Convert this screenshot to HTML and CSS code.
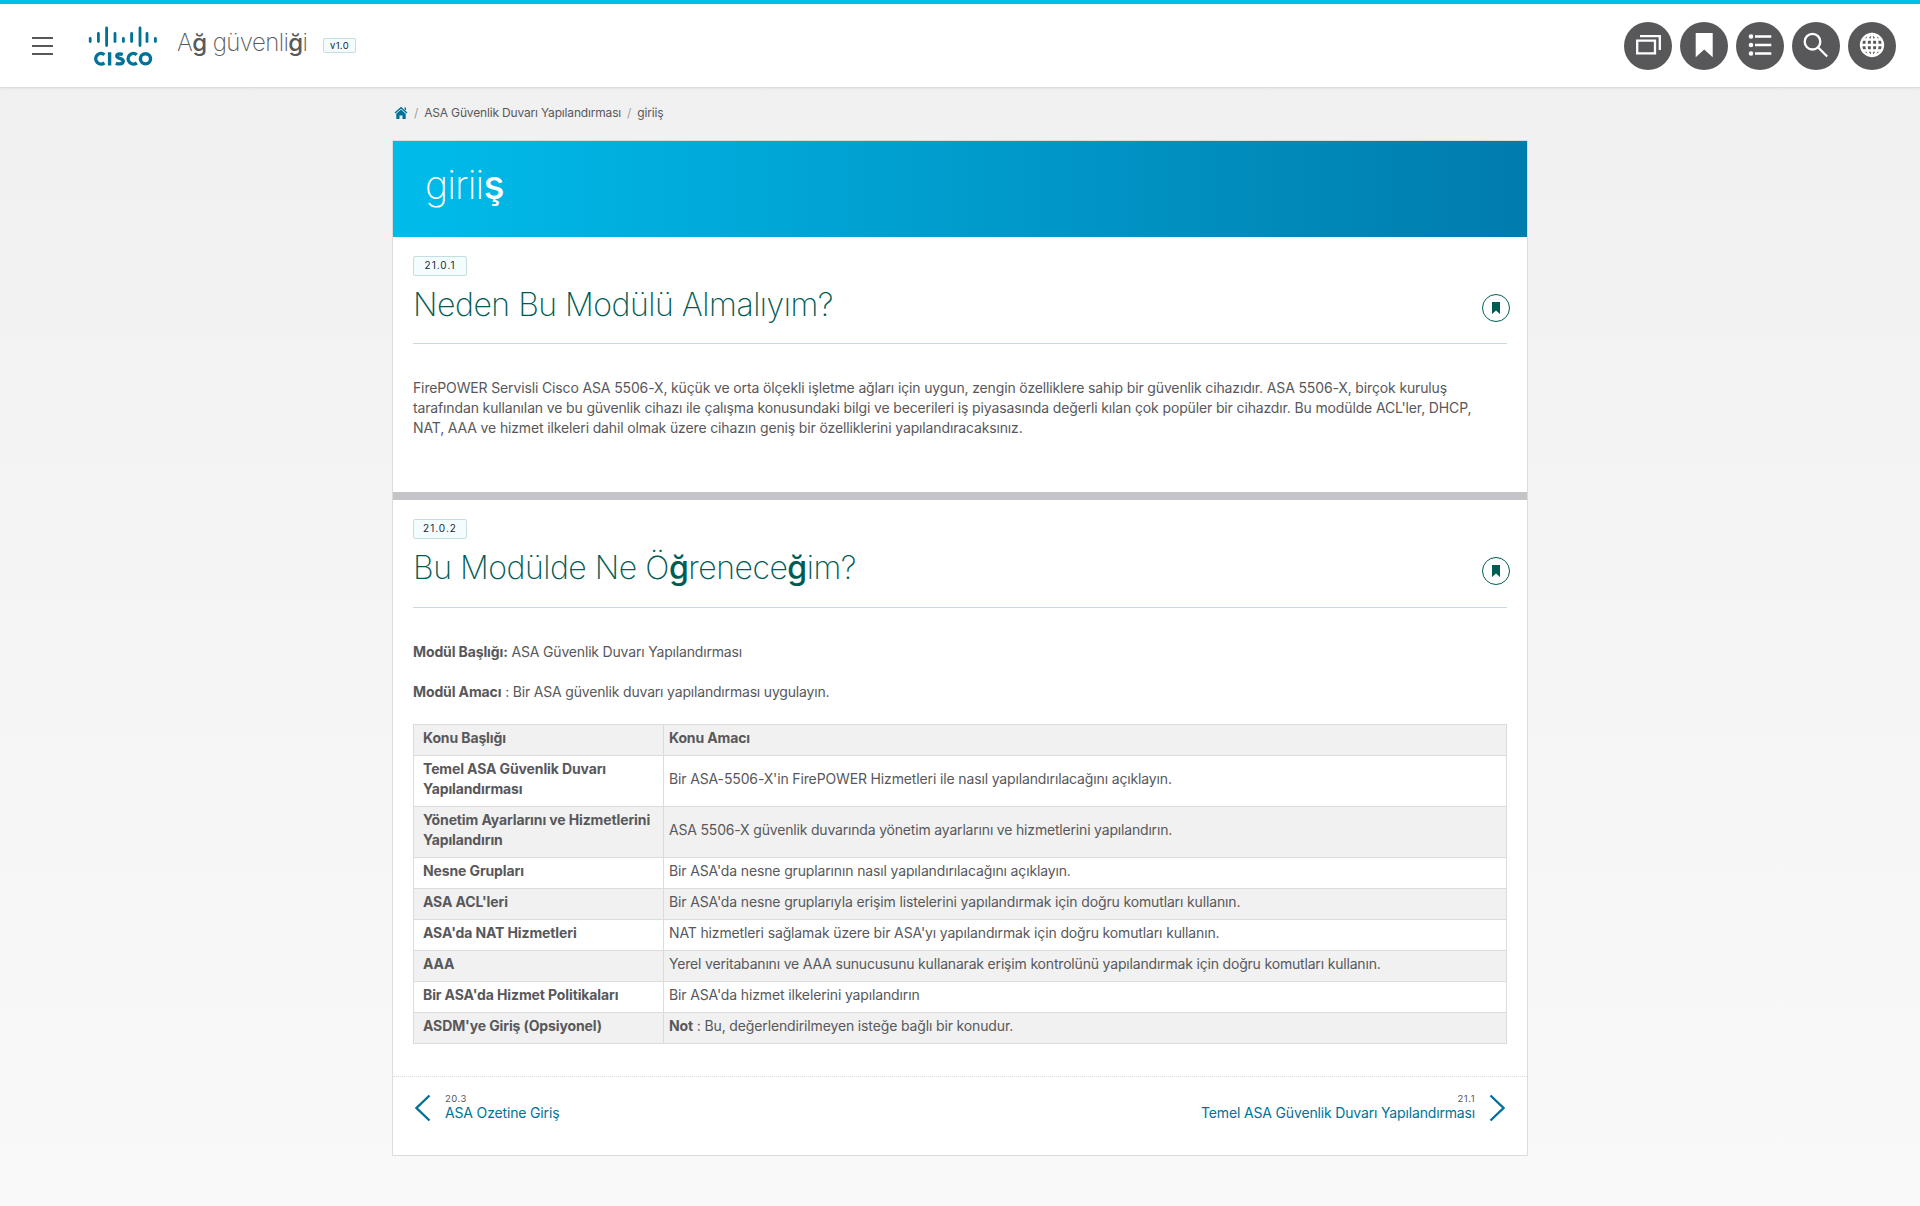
FILE: index.html
```html
<!DOCTYPE html>
<html lang="tr">
<head>
<meta charset="utf-8">
<title>Ağ güvenliği</title>
<link rel="stylesheet" href="styles.css">
</head>
<body>
<header class="topbar">
  <button class="menu-btn" aria-label="Menü"><span></span><span></span><span></span></button>
  <svg class="logo" width="70" height="42" viewBox="0 0 70 42" role="img" aria-label="Cisco">
    <g stroke="#007298" stroke-width="2.8" stroke-linecap="round">
      <path d="M2.2 13.4v3.2M10.4 8.4v8.2M18.6 2.9v17.700M27 8.4v8.2M35.4 13.4v3.2M43.6 8.4v8.2M52 2.9v17.700M59 8.4v8.2M67.4 13.4v3.2"/>
    </g>
    <g fill="none" stroke="#007298" stroke-width="3.4">
      <path d="M16.400 29.700a5.300 5.300 0 1 0 0 8.200M21.600 27.200v13.400M34.800 29.500c-2-.8-6-.9-6 1.500 0 3 6.400 1.700 6.400 5.200 0 3-4.600 3.200-7.400 2M48.800 29.700a5.300 5.300 0 1 0 0 8.200"/>
      <circle cx="57.500" cy="33.800" r="5.100"/>
    </g>
  </svg>
  <h1 class="course">A<b>ğ</b> güvenli<b>ğ</b>i</h1>
  <span class="version">v1.0</span>
  <nav class="tools">
    <button class="tool" aria-label="Pencereler"><svg width="48" height="48" viewBox="0 0 48 48"><path d="M13.200 18.700h17.800v12.600H13.200zM16 14.200h19.800V28"/></svg></button>
    <button class="tool" aria-label="Yer imi"><svg width="48" height="48" viewBox="0 0 48 48"><path class="solid" d="M15.700 11h17v24.200L24.200 27.500 15.700 35.200z"/></svg></button>
    <button class="tool" aria-label="Liste"><svg width="48" height="48" viewBox="0 0 48 48"><path d="M19 14.500h16.300M19 23h16.300M19 31.500h16.300"/><g class="solid"><circle cx="15" cy="14.500" r="2.300"/><circle cx="15" cy="23" r="2.300"/><circle cx="15" cy="31.500" r="2.300"/></g></svg></button>
    <button class="tool" aria-label="Ara"><svg width="48" height="48" viewBox="0 0 48 48"><circle cx="20.500" cy="19.700" r="7.800"/><path d="M25.200 24.500l10 10"/></svg></button>
    <button class="tool" aria-label="Dil"><svg width="48" height="48" viewBox="0 0 48 48"><circle cx="24" cy="23" r="11"/><ellipse cx="24" cy="23" rx="5.500" ry="11"/><path d="M24 12v22M13 23h22M15 17.500h18M15 28.500h18"/></svg></button>
  </nav>
</header>
<main class="page">
  <nav class="crumbs">
    <svg width="14" height="14" viewBox="0 0 14 14"><path d="M1 7l6-5.300L13 7" fill="none" stroke="#007298" stroke-width="1.300"/><path d="M7 3.500l4.700 4.200V13H8.500V9.500h-3V13H2.300V7.700zM10.500 1.500H12v3l-1.500-1.300z" fill="#007298"/></svg>
    <i>/</i><span>ASA Güvenlik Duvarı Yapılandırması</span><i>/</i><span>giriiş</span>
  </nav>
  <article class="card">
    <div class="banner"><h2>girii<b>ş</b></h2></div>
    <section class="topic">
      <span class="tag">21.0.1</span>
      <div class="heading"><h3>Neden Bu Modülü Almalıyım?</h3>
        <button class="mark" aria-label="Yer imi"><svg width="8" height="12" viewBox="0 0 8 12"><path d="M0 0h8v12L4 8.500 0 12z" fill="#005c53"/></svg></button></div>
      <p class="intro">FirePOWER Servisli Cisco ASA 5506-X, küçük ve orta ölçekli işletme ağları için uygun, zengin özelliklere sahip bir güvenlik cihazıdır. ASA 5506-X, birçok kuruluş<br>tarafından kullanılan ve bu güvenlik cihazı ile çalışma konusundaki bilgi ve becerileri iş piyasasında değerli kılan çok popüler bir cihazdır. Bu modülde ACL'ler, DHCP,<br>NAT, AAA ve hizmet ilkeleri dahil olmak üzere cihazın geniş bir özelliklerini yapılandıracaksınız.</p>
    </section>
    <section class="topic topic-next">
      <span class="tag">21.0.2</span>
      <div class="heading"><h3>Bu Modülde Ne Ö<b>ğ</b>renece<b>ğ</b>im?</h3>
        <button class="mark" aria-label="Yer imi"><svg width="8" height="12" viewBox="0 0 8 12"><path d="M0 0h8v12L4 8.500 0 12z" fill="#005c53"/></svg></button></div>
      <p class="meta"><strong>Modül Başlığı:</strong> <span class="tight">ASA Güvenlik Duvarı Yapılandırması</span></p>
      <p class="meta"><strong>Modül Amacı</strong> <span class="tight">: Bir ASA güvenlik duvarı yapılandırması uygulayın.</span></p>
      <table class="topics">
        <tr><th>Konu Başlığı</th><th>Konu Amacı</th></tr>
        <tr><th>Temel ASA Güvenlik Duvarı Yapılandırması</th><td>Bir ASA-5506-X'in FirePOWER Hizmetleri ile nasıl yapılandırılacağını açıklayın.</td></tr>
        <tr><th>Yönetim Ayarlarını ve Hizmetlerini Yapılandırın</th><td class="tight">ASA 5506-X güvenlik duvarında yönetim ayarlarını ve hizmetlerini yapılandırın.</td></tr>
        <tr><th>Nesne Grupları</th><td>Bir ASA'da nesne gruplarının nasıl yapılandırılacağını açıklayın.</td></tr>
        <tr><th>ASA ACL'leri</th><td>Bir ASA'da nesne gruplarıyla erişim listelerini yapılandırmak için doğru komutları kullanın.</td></tr>
        <tr><th>ASA'da NAT Hizmetleri</th><td>NAT hizmetleri sağlamak üzere bir ASA'yı yapılandırmak için doğru komutları kullanın.</td></tr>
        <tr><th>AAA</th><td class="tight">Yerel veritabanını ve AAA sunucusunu kullanarak erişim kontrolünü yapılandırmak için doğru komutları kullanın.</td></tr>
        <tr><th>Bir ASA'da Hizmet Politikaları</th><td>Bir ASA'da hizmet ilkelerini yapılandırın</td></tr>
        <tr><th>ASDM'ye Giriş (Opsiyonel)</th><td><strong>Not</strong> : Bu, değerlendirilmeyen isteğe bağlı bir konudur.</td></tr>
      </table>
    </section>
    <footer class="pager">
      <a class="prev"><svg width="17" height="28" viewBox="0 0 17 28"><path d="M15.500 1.500L2.500 14l13 12.500"/></svg><span><small>20.3</small><span>ASA Ozetine Giriş</span></span></a>
      <a class="next"><span><small>21.1</small><span>Temel ASA Güvenlik Duvarı Yapılandırması</span></span><svg width="17" height="28" viewBox="0 0 17 28"><path d="M1.500 1.500l13 12.500-13 12.500"/></svg></a>
    </footer>
  </article>
</main>
</body>
</html>
```
FILE: styles.css
```css
* { box-sizing: border-box; }
body {
  margin: 0;
  min-height: 1206px;
  font: 14px/20px Inter, "Liberation Sans", sans-serif;
  letter-spacing: -.14px;
  color: #58585b;
  background: linear-gradient(#f0f0f0, #f9f9f9);
}
h1, h2, h3, p { margin: 0; font-weight: 200; }
button { border: 0; padding: 0; margin: 0; background: none; }
b { font-weight: 550; }
.tight { letter-spacing: -.18px; }
.topbar {
  display: flex;
  align-items: flex-start;
  height: 88px;
  border-top: 4px solid #00bceb;
  border-bottom: 1px solid #dcdcdc;
  box-shadow: 0 1px 2px rgba(0, 0, 0, .06);
  background: #fff;
  padding: 0 24px 0 32px;
}
.menu-btn { display: grid; gap: 6px; width: 21px; margin-top: 33px; }
.menu-btn span { height: 2px; background: #58585b; }
.logo { margin: 21px 0 0 35px; }
.course { width: 130px; white-space: nowrap; font-size: 24px; line-height: 32px; letter-spacing: -.58px; margin: 23px 0 0 19px; }
.version {
  margin: 34px 0 0 16px;
  height: 15px; width: 33px;
  border: 1px solid #c3dedd; border-radius: 2px;
  background: #f3fcff; color: #23282e;
  font-size: 9.500px; line-height: 13px; letter-spacing: .3px; text-align: center;
}
.tools { display: flex; gap: 8px; margin: 18px 0 0 auto; }
.tool { width: 48px; height: 48px; border-radius: 50%; background: #58585b; }
.tool svg { display: block; fill: none; stroke: #fff; stroke-width: 2.3; }
.tool .solid { fill: #fff; stroke: none; }
.page { width: 1136px; margin: 0 auto; }
.crumbs { display: flex; align-items: center; height: 52px; padding: 0 0 2px 2px; font-size: 12px; letter-spacing: -.17px; }
.crumbs i { font-style: normal; color: #9e9ea2; margin: 0 6px; }
.card { border: 1px solid #dcdcdc; background: #fff; height: 1016px; }
.banner { height: 96px; padding: 20px 0 0 32px; color: #fff; background: linear-gradient(90deg, #00bceb, #007cad); }
.banner h2 { font-size: 39px; line-height: 48px; letter-spacing: -.9px; }
.topic { height: 255px; padding: 19px 20px 0; }
.topic-next { height: 584px; border-top: 8px solid #c4c4c9; }
.tag {
  display: block; width: 54px; height: 20px;
  border: 1px solid #c3dedd; border-radius: 2px;
  background: #f3fcff; color: #23282e;
  font-size: 10px; line-height: 16px; letter-spacing: 1px; text-align: center;
}
.heading { display: flex; justify-content: space-between; height: 68px; border-bottom: 1px solid #c3dedd; color: #005c53; }
.topic-next .heading { height: 69px; }
.heading h3 { font-size: 32px; line-height: 40px; letter-spacing: -.48px; margin-top: 9px; }
.mark { display: grid; place-items: center; width: 28px; height: 28px; border: 1px solid #005c53; border-radius: 50%; margin: 18px -3px 0 0; }
.intro { font-weight: 400; padding-top: 34px; white-space: nowrap; }
.meta { font-weight: 400; margin-top: 20px; }
.heading + .meta { margin-top: 34px; }
strong, th { font-weight: 700; letter-spacing: -.12px; }
.topics { width: 1094px; margin-top: 22px; border-collapse: collapse; table-layout: fixed; border: 1px solid #dcdcdc; }
.topics th, .topics td { border: 1px solid #dcdcdc; text-align: left; padding: 3px 4px 7px 5px; }
.topics th:first-child { width: 250px; padding-left: 9px; }
.topics tr:nth-child(odd) { background: #f1f1f1; }
.pager { display: flex; justify-content: space-between; border-top: 1px dotted #dcdcdc; padding: 17px 21px 0; color: #007298; }
.prev, .next { display: flex; gap: 14px; line-height: 18px; letter-spacing: -.16px; }
.prev > span, .next > span { margin-top: -1px; }
.pager svg { fill: none; stroke: #007298; stroke-width: 2.400; }
.pager small { display: block; font-size: 9.500px; line-height: 11px; color: #58585b; letter-spacing: .5px; }
.next { text-align: right; }
```
